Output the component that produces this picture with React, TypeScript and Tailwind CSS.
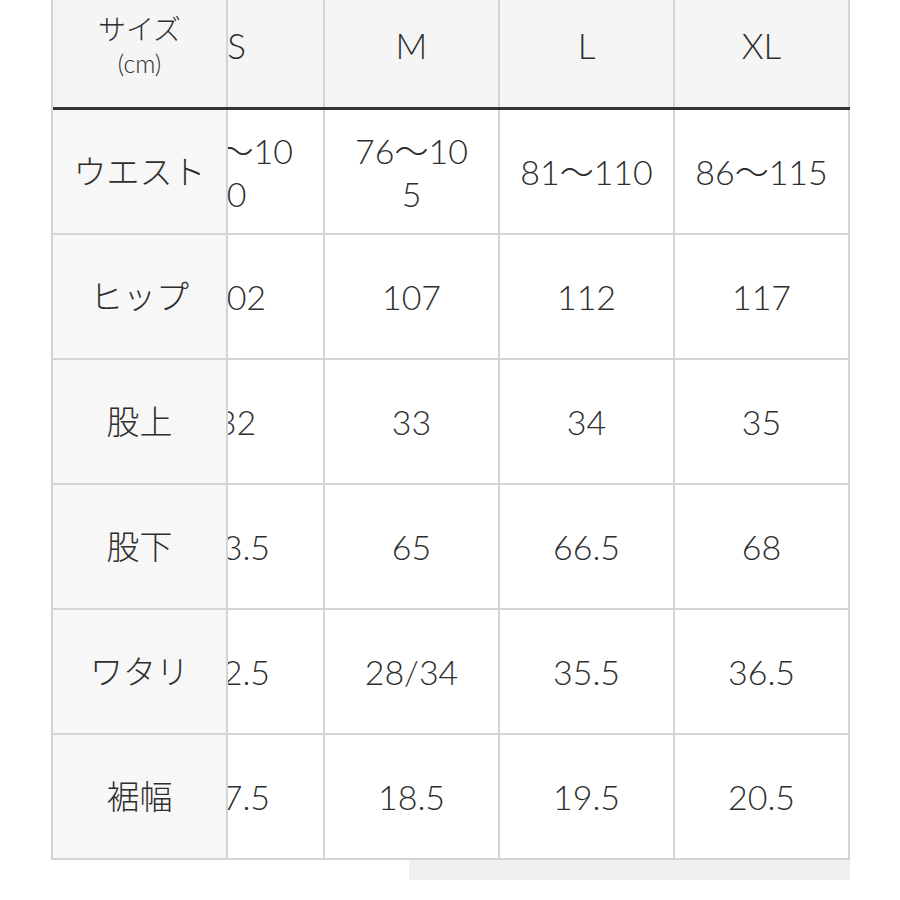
import React, { useEffect, useRef } from "react";

const sizes = ["S", "M", "L", "XL"];

const rows: { label: string; values: string[] }[] = [
  { label: "ウエスト", values: ["71〜10\n0", "76〜10\n5", "81〜110", "86〜115"] },
  { label: "ヒップ", values: ["102", "107", "112", "117"] },
  { label: "股上", values: ["32", "33", "34", "35"] },
  { label: "股下", values: ["63.5", "65", "66.5", "68"] },
  { label: "ワタリ", values: ["32.5", "28/34", "35.5", "36.5"] },
  { label: "裾幅", values: ["17.5", "18.5", "19.5", "20.5"] },
];

const font = "font-['Lato','Noto_Sans_CJK_JP',sans-serif]";

const App: React.FC = () => {
  const scroller = useRef<HTMLDivElement>(null);

  // table is scrolled all the way to the right
  useEffect(() => {
    if (scroller.current) scroller.current.scrollLeft = 9999;
  }, []);

  return (
    <div className={`min-h-screen bg-white text-[#2e2e2e] ${font} font-light overflow-hidden`}>
      <div className="ml-[51px] w-[799px] -mt-[17px]">
        <div className="border-l-2 border-[#d4d4d4]">
          <div
            ref={scroller}
            className="overflow-x-auto [scrollbar-width:none]"
          >
            <div className="w-max">
              <div className="flex h-[127px] border-b-[3px] border-[#333] bg-[#f5f5f5]">
                <div className="sticky left-0 z-10 w-[175px] shrink-0 border-r-2 border-[#d4d4d4] bg-[#f5f5f5] flex flex-col items-center justify-center pt-[2px]">
                  <span className="text-[28px] leading-[34px]">サイズ</span>
                  <span className="text-[25px] leading-[34px]">(cm)</span>
                </div>
                {sizes.map((s) => (
                  <div
                    key={s}
                    className="w-[175px] shrink-0 border-r-2 border-[#d4d4d4] flex items-center justify-center text-[35px]"
                  >
                    {s}
                  </div>
                ))}
              </div>
              {rows.map((r) => (
                <div key={r.label} className="flex h-[125px] border-b-2 border-[#d4d4d4]">
                  <div className="sticky left-0 z-10 w-[175px] shrink-0 border-r-2 border-[#d4d4d4] bg-[#f7f7f7] flex items-center justify-center text-[33px]">
                    {r.label}
                  </div>
                  {r.values.map((v, i) => (
                    <div
                      key={i}
                      className="w-[175px] shrink-0 border-r-2 border-[#d4d4d4] bg-white flex items-center justify-center text-center whitespace-pre-line text-[34px] leading-[43px]"
                    >
                      {v}
                    </div>
                  ))}
                </div>
              ))}
            </div>
          </div>
        </div>
        <div className="ml-auto w-[441px] h-[20px] bg-[#efefef]" />
      </div>
    </div>
  );
};

export default App;
